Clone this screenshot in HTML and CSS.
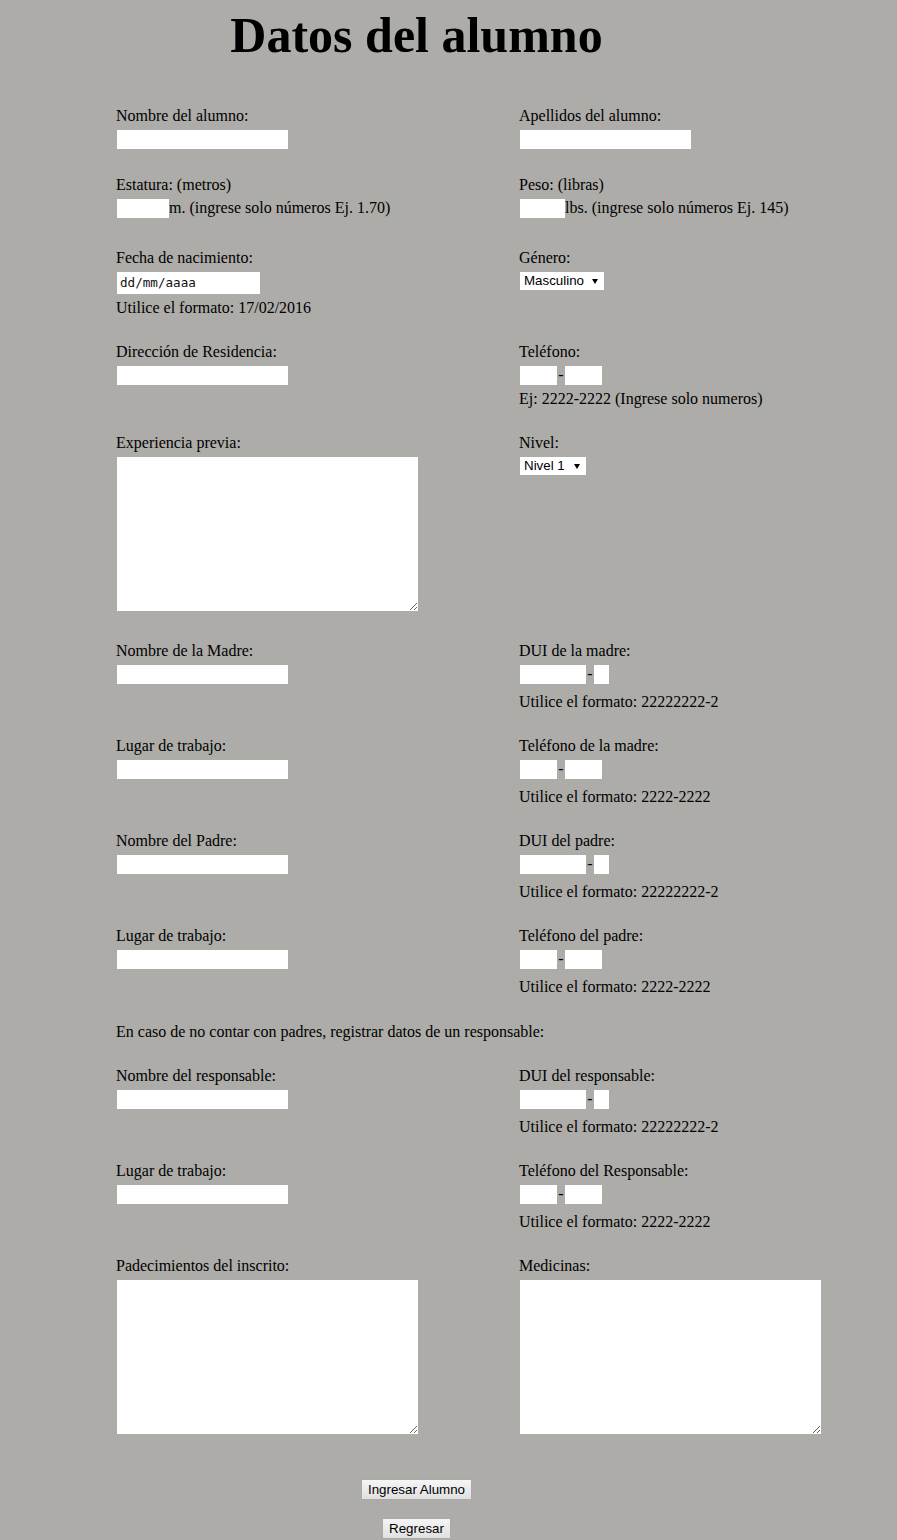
FILE: index.html
```html
<!DOCTYPE html>
<html lang="es">
<head>
<meta charset="utf-8">
<title>Datos del alumno</title>
<link rel="stylesheet" href="styles.css">
</head>
<body>
<div class="page">
  <h1 class="title">Datos del alumno</h1>

  <form class="form">
    <div class="field">
      <label class="lbl" for="nombre">Nombre del alumno:</label>
      <input class="txt ctl" id="nombre" type="text">
    </div>
    <div class="field">
      <label class="lbl" for="apellidos">Apellidos del alumno:</label>
      <input class="txt ctl" id="apellidos" type="text">
    </div>

    <div class="field">
      <label class="lbl" for="estatura">Estatura: (metros)</label>
      <div class="inline-row unit-row ctl">
        <input class="txt w-m" id="estatura" type="text"><span class="inline-text">m. (ingrese solo números Ej. 1.70)</span>
      </div>
    </div>
    <div class="field">
      <label class="lbl" for="peso">Peso: (libras)</label>
      <div class="inline-row unit-row ctl">
        <input class="txt w-lb" id="peso" type="text"><span class="inline-text">lbs. (ingrese solo números Ej. 145)</span>
      </div>
    </div>

    <div class="field">
      <label class="lbl">Fecha de nacimiento:</label>
      <span class="date ctl">dd/mm/aaaa</span>
      <span class="hint hint-near">Utilice el formato: 17/02/2016</span>
    </div>
    <div class="field">
      <label class="lbl" for="genero">Género:</label>
      <span class="sel-wrap ctl">
        <select class="sel w-gen" id="genero"><option>Masculino</option><option>Femenino</option></select>
      </span>
    </div>

    <div class="field">
      <label class="lbl" for="direccion">Dirección de Residencia:</label>
      <input class="txt ctl" id="direccion" type="text">
    </div>
    <div class="field">
      <label class="lbl" for="tel1">Teléfono:</label>
      <div class="inline-row ctl">
        <input class="txt w-tel" id="tel1" type="text"><span class="sep">-</span><input class="txt w-tel" type="text">
      </div>
      <span class="hint hint-near">Ej: 2222-2222 (Ingrese solo numeros)</span>
    </div>

    <div class="field">
      <label class="lbl" for="experiencia">Experiencia previa:</label>
      <textarea class="area ctl" id="experiencia"></textarea>
    </div>
    <div class="field">
      <label class="lbl" for="nivel">Nivel:</label>
      <span class="sel-wrap ctl">
        <select class="sel w-niv" id="nivel"><option>Nivel 1</option><option>Nivel 2</option><option>Nivel 3</option></select>
      </span>
    </div>

    <div class="field">
      <label class="lbl" for="madre">Nombre de la Madre:</label>
      <input class="txt ctl" id="madre" type="text">
    </div>
    <div class="field">
      <label class="lbl" for="duimadre">DUI de la madre:</label>
      <div class="inline-row ctl">
        <input class="txt w-dui" id="duimadre" type="text"><span class="sep">-</span><input class="txt w-dig" type="text">
      </div>
      <span class="hint">Utilice el formato: 22222222-2</span>
    </div>

    <div class="field">
      <label class="lbl" for="trabmadre">Lugar de trabajo:</label>
      <input class="txt ctl" id="trabmadre" type="text">
    </div>
    <div class="field">
      <label class="lbl" for="telmadre">Teléfono de la madre:</label>
      <div class="inline-row ctl">
        <input class="txt w-tel" id="telmadre" type="text"><span class="sep">-</span><input class="txt w-tel" type="text">
      </div>
      <span class="hint">Utilice el formato: 2222-2222</span>
    </div>

    <div class="field">
      <label class="lbl" for="padre">Nombre del Padre:</label>
      <input class="txt ctl" id="padre" type="text">
    </div>
    <div class="field">
      <label class="lbl" for="duipadre">DUI del padre:</label>
      <div class="inline-row ctl">
        <input class="txt w-dui" id="duipadre" type="text"><span class="sep">-</span><input class="txt w-dig" type="text">
      </div>
      <span class="hint">Utilice el formato: 22222222-2</span>
    </div>

    <div class="field">
      <label class="lbl" for="trabpadre">Lugar de trabajo:</label>
      <input class="txt ctl" id="trabpadre" type="text">
    </div>
    <div class="field">
      <label class="lbl" for="telpadre">Teléfono del padre:</label>
      <div class="inline-row ctl">
        <input class="txt w-tel" id="telpadre" type="text"><span class="sep">-</span><input class="txt w-tel" type="text">
      </div>
      <span class="hint">Utilice el formato: 2222-2222</span>
    </div>

    <p class="note">En caso de no contar con padres, registrar datos de un responsable:</p>

    <div class="field">
      <label class="lbl" for="resp">Nombre del responsable:</label>
      <input class="txt ctl" id="resp" type="text">
    </div>
    <div class="field">
      <label class="lbl" for="duiresp">DUI del responsable:</label>
      <div class="inline-row ctl">
        <input class="txt w-dui" id="duiresp" type="text"><span class="sep">-</span><input class="txt w-dig" type="text">
      </div>
      <span class="hint">Utilice el formato: 22222222-2</span>
    </div>

    <div class="field">
      <label class="lbl" for="trabresp">Lugar de trabajo:</label>
      <input class="txt ctl" id="trabresp" type="text">
    </div>
    <div class="field">
      <label class="lbl" for="telresp">Teléfono del Responsable:</label>
      <div class="inline-row ctl">
        <input class="txt w-tel" id="telresp" type="text"><span class="sep">-</span><input class="txt w-tel" type="text">
      </div>
      <span class="hint">Utilice el formato: 2222-2222</span>
    </div>

    <div class="field">
      <label class="lbl" for="padecimientos">Padecimientos del inscrito:</label>
      <textarea class="area ctl" id="padecimientos"></textarea>
    </div>
    <div class="field">
      <label class="lbl" for="medicinas">Medicinas:</label>
      <textarea class="area ctl" id="medicinas"></textarea>
    </div>
  </form>

  <div class="actions">
    <button class="btn" type="button">Ingresar Alumno</button>
    <button class="btn" type="button">Regresar</button>
  </div>
</div>
</body>
</html>
```

FILE: styles.css
```css
html, body {
  margin: 0;
  padding: 0;
}

body {
  background: #adaca8;
  color: #000;
  font-family: "Liberation Serif", "Times New Roman", serif;
  font-size: 16px;
}

.page {
  padding: 7px 0 0 116px;
}

.title {
  width: 601px;
  margin: 0;
  text-align: center;
  font-size: 50px;
  line-height: 56px;
  font-weight: bold;
}

.form {
  margin: 43px 0 0 0;
  display: grid;
  grid-template-columns: 403px 302px;
  row-gap: 26px;
}

.field {
  display: flex;
  flex-direction: column;
  align-items: flex-start;
}

.lbl {
  display: block;
  padding-top: 2px;
  line-height: 16px;
  margin-bottom: 6px;
}

.ctl {
  margin-left: 1px;
}

.txt {
  display: block;
  box-sizing: border-box;
  width: 171px;
  height: 19px;
  margin-top: 0;
  margin-bottom: 0;
  padding: 0 2px;
  border: 0;
  border-radius: 0;
  background: #fff;
  font-family: Arial, "Liberation Sans", sans-serif;
  font-size: 13.33px;
  outline: none;
}

.w-m { width: 52px; }
.w-lb { width: 45px; }
.w-tel { width: 37px; }
.w-dui { width: 66px; }
.w-dig { width: 15px; }

.inline-row {
  display: flex;
  align-items: flex-start;
}

.unit-row {
  padding-bottom: 4px;
}

.inline-text {
  padding-top: 1px;
  line-height: 15px;
  white-space: nowrap;
}

.sep {
  width: 8px;
  text-align: center;
  padding-top: 1px;
  line-height: 15px;
}

.hint {
  display: block;
  padding-top: 2px;
  line-height: 16px;
  margin-top: 8px;
}

.hint-near {
  margin-top: 4px;
}

.date {
  display: block;
  box-sizing: border-box;
  width: 143px;
  height: 22px;
  padding-left: 3px;
  background: #fff;
  font-family: "DejaVu Sans Mono", "Liberation Mono", monospace;
  font-size: 12.6px;
  line-height: 22px;
  color: #111;
}

.sel-wrap {
  position: relative;
  display: block;
}

.sel-wrap::after {
  content: "";
  position: absolute;
  right: 6px;
  top: 7px;
  width: 0;
  height: 0;
  border-left: 3px solid transparent;
  border-right: 3px solid transparent;
  border-top: 5px solid #000;
  pointer-events: none;
}

.sel {
  display: block;
  -webkit-appearance: none;
  appearance: none;
  box-sizing: border-box;
  height: 18px;
  margin: 0;
  padding: 0 0 0 4px;
  border: 0;
  border-radius: 0;
  background: #fff;
  color: #000;
  font-family: Arial, "Liberation Sans", sans-serif;
  font-size: 13.33px;
  line-height: 18px;
  outline: none;
}

.w-gen { width: 84px; }
.w-niv { width: 66px; }

.area {
  display: block;
  box-sizing: border-box;
  width: 301px;
  height: 154px;
  margin-top: 0;
  margin-bottom: 4px;
  padding: 2px;
  border: 0;
  border-radius: 0;
  background: #fff;
  font-family: "Liberation Mono", monospace;
  font-size: 13.33px;
  outline: none;
}

.note {
  grid-column: 1 / -1;
  margin: 1px 0 0 0;
  padding-top: 2px;
  line-height: 16px;
}

.actions {
  width: 601px;
  margin-top: 41px;
  display: flex;
  flex-direction: column;
  align-items: center;
  gap: 18px;
}

.btn {
  margin: 0;
  padding: 2px 6px;
  border: 1px solid #a9a9a9;
  border-radius: 1px;
  background: linear-gradient(#f5f5f5, #e0e0e0);
  color: #000;
  font-family: Arial, "Liberation Sans", sans-serif;
  font-size: 13.33px;
  line-height: 15px;
}
```
